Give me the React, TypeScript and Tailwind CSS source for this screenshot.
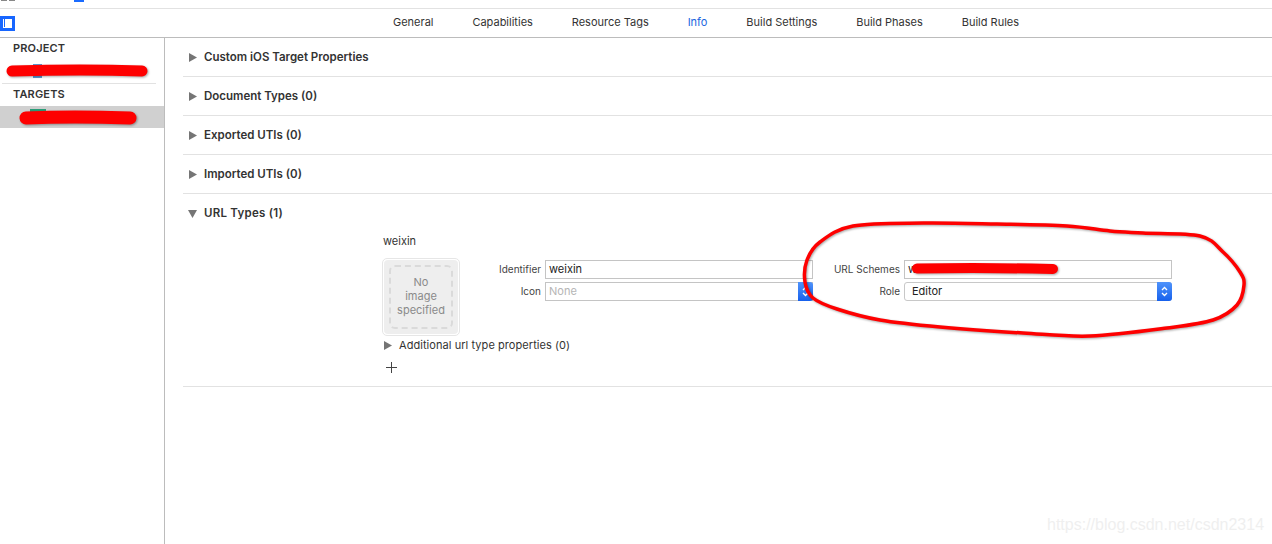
const tabs = ["General", "Capabilities", "Resource Tags", "Info", "Build Settings", "Build Phases", "Build Rules"];
const sections = ["Custom iOS Target Properties", "Document Types (0)", "Exported UTIs (0)", "Imported UTIs (0)"];

const circle: [number, number][] = [
  [853, 226], [923, 223], [997, 224], [1067, 226], [1110, 231], [1143, 233], [1200, 236], [1223, 252],
  [1240, 272], [1244, 285], [1237, 305], [1213, 320], [1167, 328], [1090, 336], [1023, 333], [940, 327],
  [880, 320], [837, 309], [813, 298], [805, 282], [807, 260], [820, 242],
];

// closed catmull-rom through the hand drawn points
function smooth(pts: [number, number][]) {
  const n = pts.length;
  let d = `M${pts[0][0]} ${pts[0][1]}`;
  for (let i = 0; i < n; i++) {
    const p0 = pts[(i - 1 + n) % n], p1 = pts[i], p2 = pts[(i + 1) % n], p3 = pts[(i + 2) % n];
    d += ` C${p1[0] + (p2[0] - p0[0]) / 6} ${p1[1] + (p2[1] - p0[1]) / 6} ${p2[0] - (p3[0] - p1[0]) / 6} ${p2[1] - (p3[1] - p1[1]) / 6} ${p2[0]} ${p2[1]}`;
  }
  return d;
}

function Triangle({ down = false }: { down?: boolean }) {
  return (
    <svg width="9" height="9" viewBox="0 0 9 9" className="shrink-0">
      <path d={down ? "M0 1h9L4.5 9z" : "M1 0l8 4.5L1 9z"} fill="#757575" />
    </svg>
  );
}

function SelectStepper() {
  return (
    <div className="absolute right-[-1px] top-[-1px] bottom-[-1px] w-[15px] rounded-r-[3px] bg-gradient-to-b from-[#4f93fb] to-[#1660ec] flex items-center justify-center">
      <svg width="9" height="13" viewBox="0 0 9 13" fill="none" stroke="#fff" strokeWidth="1.3">
        <path d="M2 5l2.5-2.5L7 5M2 8l2.5 2.5L7 8" />
      </svg>
    </div>
  );
}

export default function App() {
  return (
    <div className="relative w-[1272px] h-[544px] overflow-hidden bg-white font-['Inter',sans-serif] text-[#2b2b2b] flex flex-col">
      <div className="h-[9px] shrink-0 border-b border-[#e2e2e2] flex items-start">
        <div className="ml-[1px] w-[6px] h-[1px] bg-[#888]" />
        <div className="ml-[2px] w-[6px] h-[1px] bg-[#888]" />
        <div className="ml-[59px] w-[10px] h-[2px] bg-[#1a6bff]" />
      </div>

      <div className="h-[29px] shrink-0 border-b border-[#bcbcbc] flex items-center relative">
        <div className="w-[15px] h-[15px] border-[3px] border-[#1766ff] flex items-center">
          <div className="ml-[1px] w-[1px] h-[8px] bg-[#1766ff]" />
        </div>
        <div className="ml-[378px] pb-[2px] flex gap-[38.9px] text-[11px] leading-none">
          {tabs.map((t) => (
            <span key={t} className={t === "Info" ? "text-[#1a66e0]" : "text-[#333]"}>{t}</span>
          ))}
        </div>
      </div>

      <div className="flex-1 flex min-h-0">
        <aside className="w-[165px] shrink-0 border-r border-[#bcbcbc] flex flex-col">
          <div className="h-[21px] pl-[13px] flex items-center text-[11px] font-semibold tracking-[0.15px] text-[#333]">PROJECT</div>
          <div className="h-[24px] pl-[33px] flex items-center">
            <div className="w-[9px] h-[14px] bg-[#5b9bd5]" />
          </div>
          <div className="mx-[2px] w-[154px] h-px bg-[#e2e2e2]" />
          <div className="h-[22px] pb-[2px] pl-[13px] flex items-center text-[11px] font-semibold tracking-[0.15px] text-[#333]">TARGETS</div>
          <div className="h-[22px] bg-[#d0d0d0] pl-[30px]">
            <div className="mt-[3px] w-[16px] h-[8px] bg-[#2a9d78]" />
          </div>
        </aside>

        <main className="flex-1 pl-[18px]">
          {sections.map((s) => (
            <div key={s} className="h-[39px] border-b border-[#e2e2e2] pl-[5px] flex items-center gap-[7px]">
              <Triangle />
              <span className="pt-[2px] text-[11.5px] font-semibold text-[#333]">{s}</span>
            </div>
          ))}

          <div className="h-[193px] border-b border-[#e2e2e2]">
            <div className="h-[39px] pl-[5px] flex items-center gap-[7px]">
              <Triangle down />
              <span className="text-[11.5px] font-semibold tracking-[0.25px] text-[#333]">URL Types (1)</span>
            </div>
            <div className="pl-[199px]">
              <div className="pl-[1px] h-[17px] text-[11px] leading-[17px] text-[#333]">weixin</div>
              <div className="flex mt-[8px]">
                <div className="w-[78px] h-[78px] shrink-0 rounded-[5px] border border-[#e6e6e6] bg-white p-[1px]">
                  <div className="w-full h-full rounded-[4px] bg-[#eeeeee] p-[5px]">
                    <div className="w-full h-full pb-[2px] rounded-[6px] border-2 border-dashed border-[#dadada] flex items-center justify-center text-center text-[11px] leading-[14px] text-[#8a8a8a]">
                      No<br />image<br />specified
                    </div>
                  </div>
                </div>
                <div className="pt-[2px] grid grid-cols-[85px_268px_91px_268px] grid-rows-[19px_19px] gap-y-[3px] text-[10px]">
                  <span className="flex items-center justify-end pr-[4px] text-[#444]">Identifier</span>
                  <div className="border border-[#c4c4c4] flex items-center pl-[3px] text-[11px] text-[#222]">weixin</div>
                  <span className="flex items-center justify-end pr-[4px] text-[#444]">URL Schemes</span>
                  <div className="border border-[#c4c4c4] flex items-center pl-[3px] text-[11px] text-[#222]">w</div>

                  <span className="flex items-center justify-end pr-[4px] text-[#444]">Icon</span>
                  <div className="relative border border-[#c4c4c4] flex items-center pl-[3px] text-[11px] text-[#b5b5b5]">
                    None
                    <SelectStepper />
                  </div>
                  <span className="flex items-center justify-end pr-[4px] text-[#444]">Role</span>
                  <div className="relative border border-[#c8c8c8] rounded-[3px] flex items-center pl-[7px] text-[11px] text-[#222]">
                    Editor
                    <SelectStepper />
                  </div>
                </div>
              </div>
              <div className="mt-[1px] h-[16px] pl-[1px] flex items-center gap-[7px] text-[11px] text-[#333]">
                <Triangle />
                <span className="tracking-[0.06px]">Additional url type properties (0)</span>
              </div>
              <svg width="13" height="13" viewBox="0 0 13 13" stroke="#444" strokeWidth="1" className="mt-[8px] ml-[3px]">
                <path d="M6.5 1v11M1 6.5h11" />
              </svg>
            </div>
          </div>
        </main>
      </div>

      {/* red marker drawn over the screenshot */}
      <svg className="absolute inset-0 pointer-events-none" width="1272" height="544" viewBox="0 0 1272 544" fill="none" stroke="#fe0000" strokeLinecap="round" style={{ filter: "drop-shadow(1px 1px 1px rgba(0,0,0,0.35))" }}>
        <path d="M12 71 C50 70 110 70 142 71" strokeWidth="11" />
        <path d="M26 118 C50 117 100 117 130 118" strokeWidth="13" />
        <path d="M917 268.5 C950 268 1010 268 1053 269" strokeWidth="10" />
        <path d={smooth(circle)} strokeWidth="3.5" />
      </svg>

      <span className="absolute left-[1047px] top-[515px] font-['Liberation_Sans',sans-serif] text-[16px] leading-[20px] text-[#efefef]">https://blog.csdn.net/csdn2314</span>
    </div>
  );
}
